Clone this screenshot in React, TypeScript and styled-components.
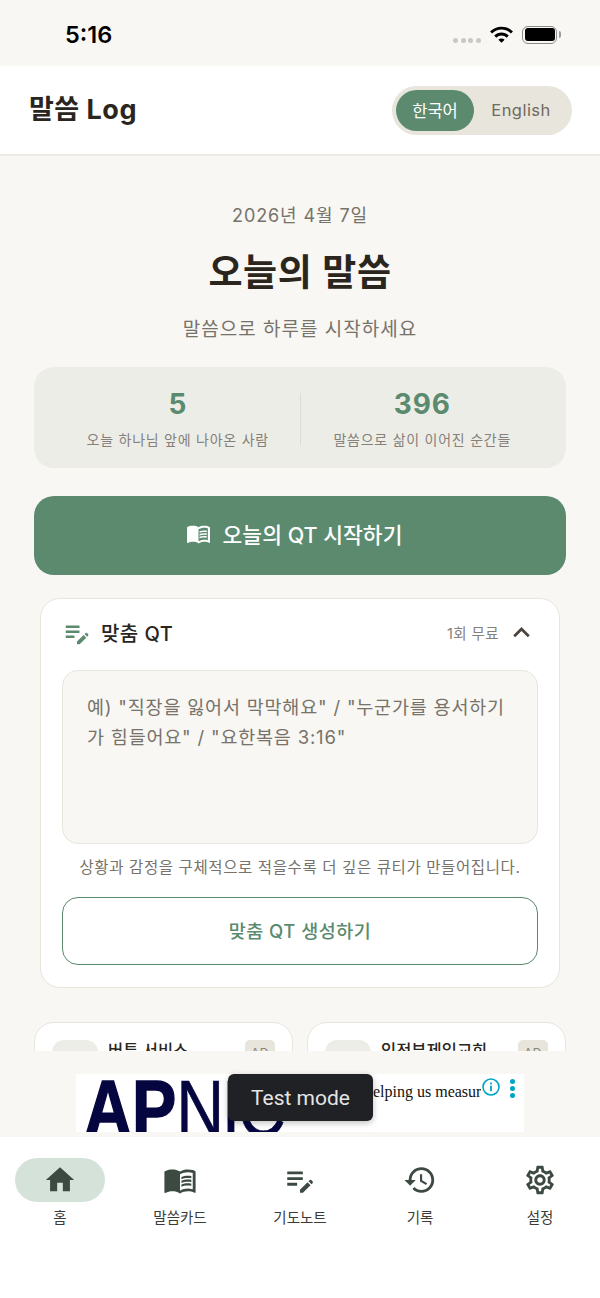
import styled, { createGlobalStyle } from "styled-components";
import {
  MdEditNote,
  MdHistory,
  MdHome,
  MdKeyboardArrowUp,
  MdMenuBook,
  MdOutlineSettings,
  MdWifi,
} from "react-icons/md";

const GlobalStyle = createGlobalStyle`
  html, body {
    margin: 0;
    padding: 0;
    background: #f8f7f3;
    font-family: Inter, "Noto Sans CJK KR", sans-serif;
  }
  * { box-sizing: border-box; }
`;

const Page = styled.div`
  position: relative;
  width: 600px;
  height: 1298px;
  display: flex;
  flex-direction: column;
  overflow: hidden;
  background: #f8f7f3;
`;

const StatusBar = styled.div`
  height: 66px;
  flex: none;
  display: flex;
  align-items: center;
  justify-content: space-between;
  padding: 0 43px 0 65px;
`;

const Clock = styled.div`
  font-size: 23.5px;
  font-weight: 600;
  color: #000;
  margin-top: 2px;
`;

const StatusIcons = styled.div`
  display: flex;
  align-items: center;
  gap: 8px;
  margin-top: 3px;
`;

const Dots = styled.div`
  display: flex;
  gap: 2.7px;
  margin-top: 12px;
  span {
    width: 5px;
    height: 5px;
    border-radius: 50%;
    background: #c8c8c8;
  }
`;

const Battery = styled.div`
  position: relative;
  width: 35px;
  height: 18px;
  border: 1.5px solid #8a8a8a;
  border-radius: 6px;
  padding: 1.5px;
  div {
    width: 100%;
    height: 100%;
    background: #000;
    border-radius: 3px;
  }
  &::after {
    content: "";
    position: absolute;
    right: -5px;
    top: 4px;
    width: 2px;
    height: 7px;
    background: #9a9a9a;
    border-radius: 0 2px 2px 0;
  }
`;

const Header = styled.header`
  height: 90px;
  flex: none;
  display: flex;
  align-items: center;
  justify-content: space-between;
  padding: 0 28px 0 29px;
  background: #fff;
  border-bottom: 2px solid #ecebe6;
`;

const Brand = styled.div`
  font-size: 27px;
  font-weight: 700;
  color: #2b261d;
  letter-spacing: 0.5px;
  margin-bottom: 6px;
`;

const LangSwitch = styled.div`
  width: 180px;
  height: 49px;
  display: flex;
  align-items: center;
  padding: 4px;
  border-radius: 25px;
  background: #e8e5dc;
`;

const LangOption = styled.div<{ $active?: boolean }>`
  flex: ${(p) => (p.$active ? "0 0 78px" : "1")};
  height: 41px;
  display: flex;
  align-items: center;
  justify-content: center;
  border-radius: 21px;
  font-size: 16.5px;
  letter-spacing: ${(p) => (p.$active ? "0" : "0.45px")};
  color: ${(p) => (p.$active ? "#fff" : "#6f6a5f")};
  background: ${(p) => (p.$active ? "#5b8a6f" : "transparent")};
`;

const Main = styled.main`
  flex: 1;
  min-height: 0;
  overflow: hidden;
  padding: 0 34px;
  display: flex;
  flex-direction: column;
  align-items: stretch;
`;

const DateLine = styled.div`
  margin-top: 46px;
  height: 28px;
  line-height: 28px;
  text-align: center;
  font-size: 18px;
  letter-spacing: 0.9px;
  color: #77726a;
`;

const Title = styled.h1`
  margin: 15px 0 0;
  height: 56px;
  line-height: 56px;
  text-align: center;
  font-size: 37px;
  font-weight: 600;
  letter-spacing: 0.6px;
  color: #2b261d;
`;

const Subtitle = styled.div`
  margin-top: 14px;
  height: 30px;
  line-height: 30px;
  text-align: center;
  font-size: 19px;
  letter-spacing: 1px;
  color: #77726a;
`;

const Stats = styled.section`
  margin-top: 22px;
  height: 101px;
  flex: none;
  display: flex;
  align-items: center;
  padding: 0 22px;
  border-radius: 20px;
  background: #ecede7;
`;

const Stat = styled.div`
  flex: 1;
  display: flex;
  flex-direction: column;
  align-items: center;
  gap: 9px;
`;

const StatValue = styled.div`
  font-size: 28px;
  line-height: 34px;
  font-weight: 700;
  color: #5b8a6f;
  letter-spacing: 0.8px;
  margin-top: 1px;
`;

const StatLabel = styled.div`
  font-size: 14px;
  line-height: 20px;
  letter-spacing: 0.75px;
  color: #85807a;
`;

const StatDivider = styled.div`
  width: 1px;
  height: 52px;
  background: #dcdcd5;
  margin-top: 2px;
`;

const StartButton = styled.button`
  margin-top: 28px;
  height: 79px;
  flex: none;
  display: flex;
  align-items: center;
  justify-content: center;
  gap: 12px;
  padding: 0 12px 4px 0;
  border: none;
  border-radius: 20px;
  background: #5b8a6f;
  color: #fff;
  font: inherit;
  font-size: 21.5px;
  font-weight: 500;
`;

const QtCard = styled.section`
  margin: 23px 6px 0;
  height: 390px;
  flex: none;
  padding: 0 21px;
  display: flex;
  flex-direction: column;
  border: 1px solid #e8e5dc;
  border-radius: 20px;
  background: #fff;
`;

const QtHead = styled.div`
  height: 71px;
  flex: none;
  display: flex;
  align-items: center;
  gap: 9px;
  padding-bottom: 4px;
`;

const QtTitle = styled.div`
  flex: 1;
  font-size: 20px;
  font-weight: 500;
  letter-spacing: 0.45px;
  color: #2b261d;
`;

const QtBadge = styled.div`
  font-size: 14.5px;
  letter-spacing: 0.4px;
  color: #85807a;
  margin-right: -3px;
`;

const QtInput = styled.div`
  height: 174px;
  flex: none;
  padding: 21px 24px;
  border: 1px solid #e8e5dc;
  border-radius: 16px;
  background: #f8f7f3;
  font-size: 18.5px;
  line-height: 30px;
  letter-spacing: 0.8px;
  color: #77726a;
`;

const QtHint = styled.div`
  margin-top: 12px;
  text-align: center;
  font-size: 15.5px;
  line-height: 24px;
  letter-spacing: 0.6px;
  color: #77726a;
  white-space: nowrap;
`;

const QtButton = styled.button`
  margin-top: 17px;
  height: 68px;
  flex: none;
  padding: 0 0 2px;
  border: 1.5px solid #5b8a6f;
  border-radius: 16px;
  background: #fff;
  color: #5b8a6f;
  font: inherit;
  font-size: 18.5px;
  font-weight: 500;
  letter-spacing: 0.5px;
`;

const AdGrid = styled.div`
  margin-top: 34px;
  flex: none;
  display: grid;
  grid-template-columns: 259px 259px;
  gap: 14px;
`;

const AdCard = styled.div`
  height: 90px;
  display: flex;
  align-items: flex-start;
  gap: 10px;
  padding: 17px 17px;
  border: 1px solid #e8e5dc;
  border-radius: 20px;
  background: #fff;
`;

const AdThumb = styled.div`
  width: 46px;
  height: 46px;
  flex: none;
  border-radius: 12px;
  background: #ecede7;
`;

const AdName = styled.div`
  flex: 1;
  font-size: 16.5px;
  font-weight: 500;
  line-height: 22px;
  color: #2b261d;
`;

const AdTag = styled.div`
  width: 30px;
  height: 24px;
  display: flex;
  align-items: center;
  justify-content: center;
  border-radius: 5px;
  background: #e8e5dc;
  font-size: 12px;
  letter-spacing: 0.5px;
  color: #8a857a;
`;

const AdStrip = styled.div`
  height: 86px;
  flex: none;
  padding-top: 23px;
  display: flex;
  justify-content: center;
`;

const Banner = styled.div`
  position: relative;
  width: 448px;
  height: 58px;
  overflow: hidden;
  background: #fff;
`;

const BannerLogo = styled.div`
  position: absolute;
  left: 8px;
  top: -5px;
  font-family: "Liberation Sans", sans-serif;
  font-size: 80px;
  line-height: 80px;
  letter-spacing: -3px;
  color: #05053f;
  font-weight: 400;
  -webkit-text-stroke: 0.6px #05053f;
  transform: scaleX(0.83);
  transform-origin: left top;
  b {
    font-weight: 700;
    letter-spacing: 0;
    -webkit-text-stroke: 1.5px #05053f;
  }
`;

const BannerText = styled.div`
  position: absolute;
  left: 289px;
  top: 9px;
  width: 116px;
  overflow: hidden;
  white-space: nowrap;
  font-family: "Liberation Serif", serif;
  font-size: 16px;
  color: #111;
`;

const BannerInfo = styled.svg`
  position: absolute;
  left: 405px;
  top: 3px;
`;

const BannerDots = styled.div`
  position: absolute;
  left: 434px;
  top: 5px;
  display: flex;
  flex-direction: column;
  gap: 2px;
  span {
    width: 5px;
    height: 5px;
    border-radius: 50%;
    background: #00a5c4;
  }
`;

const Toast = styled.div`
  position: absolute;
  left: 228px;
  top: 1074px;
  width: 145px;
  height: 47px;
  display: flex;
  align-items: center;
  justify-content: center;
  border-radius: 6px;
  background: #202124;
  box-shadow: 0 2px 6px rgba(0, 0, 0, 0.25);
  font-family: Roboto, sans-serif;
  font-size: 21px;
  color: #e4e4e4;
`;

const TabBar = styled.nav`
  height: 161px;
  flex: none;
  display: grid;
  grid-template-columns: repeat(5, 1fr);
  padding: 21px 0 0;
  background: #fff;
`;

const Tab = styled.div`
  display: flex;
  flex-direction: column;
  align-items: center;
  gap: 4px;
`;

const TabIcon = styled.div<{ $active?: boolean }>`
  width: 90px;
  height: 44px;
  display: flex;
  align-items: center;
  justify-content: center;
  border-radius: 22px;
  background: ${(p) => (p.$active ? "#d5e2da" : "transparent")};
  color: #3d4a42;
`;

const TabLabel = styled.div`
  font-size: 14.5px;
  line-height: 24px;
  color: #3d3b36;
`;

const tabs = [
  { label: "홈", Icon: MdHome, active: true },
  { label: "말씀카드", Icon: MdMenuBook },
  { label: "기도노트", Icon: MdEditNote },
  { label: "기록", Icon: MdHistory },
  { label: "설정", Icon: MdOutlineSettings },
];

export default function App() {
  return (
    <Page>
      <GlobalStyle />
      <StatusBar>
        <Clock>5:16</Clock>
        <StatusIcons>
          <Dots>
            <span />
            <span />
            <span />
            <span />
          </Dots>
          <MdWifi size={25} color="#000" />
          <Battery>
            <div />
          </Battery>
        </StatusIcons>
      </StatusBar>
      <Header>
        <Brand>말씀 Log</Brand>
        <LangSwitch>
          <LangOption $active>한국어</LangOption>
          <LangOption>English</LangOption>
        </LangSwitch>
      </Header>
      <Main>
        <DateLine>2026년 4월 7일</DateLine>
        <Title>오늘의 말씀</Title>
        <Subtitle>말씀으로 하루를 시작하세요</Subtitle>
        <Stats>
          <Stat>
            <StatValue>5</StatValue>
            <StatLabel>오늘 하나님 앞에 나아온 사람</StatLabel>
          </Stat>
          <StatDivider />
          <Stat>
            <StatValue>396</StatValue>
            <StatLabel>말씀으로 삶이 이어진 순간들</StatLabel>
          </Stat>
        </Stats>
        <StartButton>
          <MdMenuBook size={25} />
          오늘의 QT 시작하기
        </StartButton>
        <QtCard>
          <QtHead>
            <MdEditNote size={30} color="#5b8a6f" />
            <QtTitle>맞춤 QT</QtTitle>
            <QtBadge>1회 무료</QtBadge>
            <MdKeyboardArrowUp size={33} color="#4a463d" />
          </QtHead>
          <QtInput>
            예) "직장을 잃어서 막막해요" / "누군가를 용서하기가 힘들어요" / "요한복음 3:16"
          </QtInput>
          <QtHint>상황과 감정을 구체적으로 적을수록 더 깊은 큐티가 만들어집니다.</QtHint>
          <QtButton>맞춤 QT 생성하기</QtButton>
        </QtCard>
        <AdGrid>
          <AdCard>
            <AdThumb />
            <AdName>버튼 서비스</AdName>
            <AdTag>AD</AdTag>
          </AdCard>
          <AdCard>
            <AdThumb />
            <AdName>임전부제일교회</AdName>
            <AdTag>AD</AdTag>
          </AdCard>
        </AdGrid>
      </Main>
      <AdStrip>
        <Banner>
          <BannerLogo>
            <b>AP</b>NIC
          </BannerLogo>
          <BannerText>helping us measure</BannerText>
          <BannerInfo width="20" height="20" viewBox="0 0 20 20">
            <circle cx="10" cy="10" r="8" fill="none" stroke="#00a5c4" strokeWidth="1.6" />
            <rect x="9.1" y="8.6" width="1.8" height="5.6" fill="#00a5c4" />
            <rect x="9.1" y="5.6" width="1.8" height="1.8" fill="#00a5c4" />
          </BannerInfo>
          <BannerDots>
            <span />
            <span />
            <span />
          </BannerDots>
        </Banner>
      </AdStrip>
      <Toast>Test mode</Toast>
      <TabBar>
        {tabs.map(({ label, Icon, active }) => (
          <Tab key={label}>
            <TabIcon $active={active}>
              <Icon size={34} />
            </TabIcon>
            <TabLabel>{label}</TabLabel>
          </Tab>
        ))}
      </TabBar>
    </Page>
  );
}
